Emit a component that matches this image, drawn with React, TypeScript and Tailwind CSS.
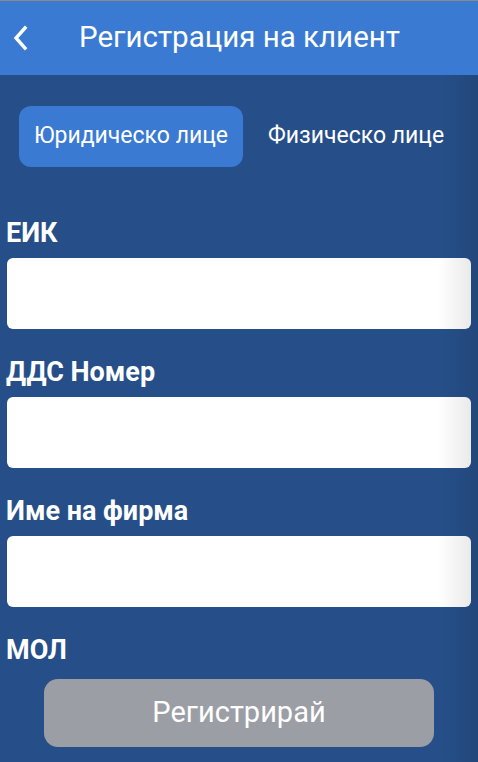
import React from "react";

function Label({ text }: { text: string }) {
  return <div className="text-[27px] font-bold text-white leading-[32px] pl-[6px]">{text}</div>;
}

function Field({ label }: { label: string }) {
  return (
    <div className="flex flex-col">
      <Label text={label} />
      <div className="mt-[9px] mx-[7px] h-[71px] rounded-[6px] bg-white" />
    </div>
  );
}

export default function App() {
  return (
    <div
      className="relative w-[478px] h-[762px] overflow-hidden bg-[#264f89] flex flex-col"
      style={{ fontFamily: "Roboto, 'Noto Sans', sans-serif" }}
    >
      <div className="h-[1px] bg-[#8a8a8a]" />
      <div className="h-[74px] bg-[#3a7ad2] flex items-center">
        <svg width="20" height="26" viewBox="0 0 20 26" className="ml-[10px]">
          <path d="M15 3 L6 13 L15 23" stroke="white" strokeWidth="3.4" fill="none" strokeLinecap="square" />
        </svg>
        <div className="ml-[49px] text-[29.5px] text-white leading-none">Регистрация на клиент</div>
      </div>
      <div className="flex items-center mt-[31px] ml-[19px]">
        <div className="w-[224px] h-[61px] rounded-[12px] bg-[#3a7ad2] flex items-center justify-center text-white text-[23px]">
          Юридическо лице
        </div>
        <div className="ml-[25px] text-white text-[23px]">Физическо лице</div>
      </div>
      <div className="flex flex-col gap-[27px] mt-[50px]">
        <Field label="ЕИК" />
        <Field label="ДДС Номер" />
        <Field label="Име на фирма" />
      </div>
      <div className="mt-[27px]">
        <Label text="МОЛ" />
      </div>
      <div className="mt-[13px] mx-[44px] w-[390px] h-[68px] rounded-[14px] bg-[#9b9ea5] flex items-center justify-center text-white text-[29px]">
        Регистрирай
      </div>
      <div className="absolute right-0 top-[75px] bottom-0 w-[40px] bg-gradient-to-r from-transparent to-black/10 pointer-events-none" />
    </div>
  );
}
